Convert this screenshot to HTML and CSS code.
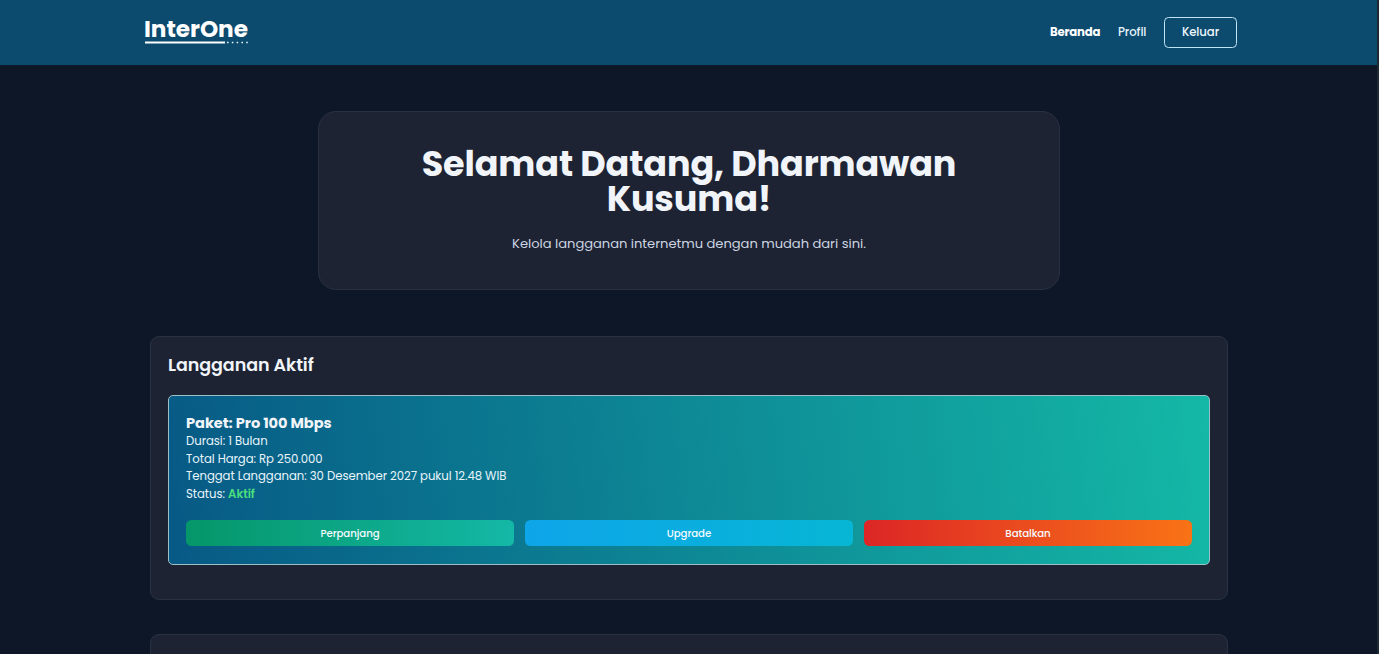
FILE: index.html
```html
<!DOCTYPE html>
<html lang="id">
<head>
<meta charset="utf-8">
<title>InterOne</title>
<link rel="stylesheet" href="styles.css">
</head>
<body>
<header class="navbar">
  <a class="brand"><span class="brand-name">InterOne</span>
    <svg class="brand-line" width="103" height="3" viewBox="0 0 103 3"><path d="M0 1.5H80" stroke="#fff" stroke-width="1.8"/><path d="M82 1.5H103" stroke="#dff6ff" stroke-width="1.6" stroke-dasharray="1.6 3.2"/></svg>
  </a>
  <nav class="menu">
    <a class="link active">Beranda</a>
    <a class="link profile">Profil</a>
    <button class="logout">Keluar</button>
  </nav>
</header>
<main>
  <section class="hero">
    <h1>Selamat Datang, Dharmawan<br>Kusuma!</h1>
    <p>Kelola langganan internetmu dengan mudah dari sini.</p>
  </section>
  <section class="panel">
    <h2>Langganan Aktif</h2>
    <article class="plan">
      <h3>Paket: Pro 100 Mbps</h3>
      <p>Durasi: 1 Bulan</p>
      <p>Total Harga: Rp 250.000</p>
      <p>Tenggat Langganan: 30 Desember 2027 pukul 12.48 WIB</p>
      <p>Status: <b>Aktif</b></p>
      <div class="actions">
        <button class="action renew">Perpanjang</button>
        <button class="action upgrade">Upgrade</button>
        <button class="action cancel">Batalkan</button>
      </div>
    </article>
  </section>
  <section class="panel next"></section>
</main>
</body>
</html>
```
FILE: styles.css
```css
* { box-sizing: border-box; margin: 0; }
html { background: #0e1627; }
body { height: 654px; overflow: hidden; border-right: 2px solid #1d2a32; background: #0e1728; color: #f1f5f9; font-family: Poppins, Inter, sans-serif; font-size: 11.7px; line-height: 17.5px; }
main { height: 589px; overflow: hidden; }
.navbar { display: flex; align-items: center; justify-content: space-between; height: 65px; padding: 0 140px 0 144px; background: #0c4a6e; }
.brand { display: flex; flex-direction: column; width: 106px; padding-bottom: 3px; }
.brand-name { color: #fff; font-size: 23.2px; line-height: 23px; font-weight: 700; letter-spacing: -.04px; white-space: nowrap; }
.brand-line { margin: 0 0 0 1px; }
.menu { display: flex; align-items: center; gap: 18px; }
.link.active { width: 50px; color: #fff; font-weight: 700; letter-spacing: -.2px; white-space: nowrap; }
.link.profile { width: 28px; color: #e5f3fb; font-weight: 500; letter-spacing: -.1px; white-space: nowrap; }
.logout { width: 73px; height: 31px; padding: 0; border: 1px solid #bfe3f3; border-radius: 4.5px; background: none; color: #edf7fc; font: 500 11.7px Poppins, Inter, sans-serif; letter-spacing: -.1px; }
.hero { width: 742px; height: 179px; margin: 46px auto 0 318px; padding: 34px 40px 0; border: 1px solid #29313f; border-radius: 18px; background: #1e2333; text-align: center; }
.hero h1 { font-size: 35px; line-height: 35px; font-weight: 700; letter-spacing: -.13px; white-space: nowrap; }
.hero p { margin-top: 18px; color: #cbd5e1; font-size: 13.1px; line-height: 20px; letter-spacing: -.03px; }
.panel { width: 1078px; height: 264px; margin: 46px 0 0 150px; padding: 16px 17px; border: 1px solid #293240; border-radius: 9px; background: #1e2333; }
.panel h2 { font-size: 17.5px; line-height: 25px; font-weight: 600; letter-spacing: -.07px; }
.plan { width: 1042px; height: 170px; margin-top: 16.5px; padding: 17.5px 17px 0; border: 1px solid #9ac0c9; border-radius: 5px; background: linear-gradient(83deg, #075985, #14b8a6); }
.plan h3 { font-size: 14.6px; line-height: 20px; font-weight: 700; letter-spacing: -.07px; }
.plan p { color: #e9f5fb; letter-spacing: -.05px; white-space: nowrap; }
.plan b { color: #4ade80; font-weight: 600; }
.actions { display: grid; grid-template-columns: repeat(3, 1fr); gap: 11px; margin-top: 17px; }
.action { height: 26px; padding: 1px 0 0; border: 0; border-radius: 5.5px; color: #f5fbff; font: 500 10.2px Poppins, Inter, sans-serif; letter-spacing: -.07px; }
.renew { background: linear-gradient(to right, #059669, #14b8a6); }
.upgrade { background: linear-gradient(to right, #0ea5e9, #06b6d4); }
.cancel { background: linear-gradient(to right, #dc2626, #f97316); }
.next { margin-top: 34px; }
```
